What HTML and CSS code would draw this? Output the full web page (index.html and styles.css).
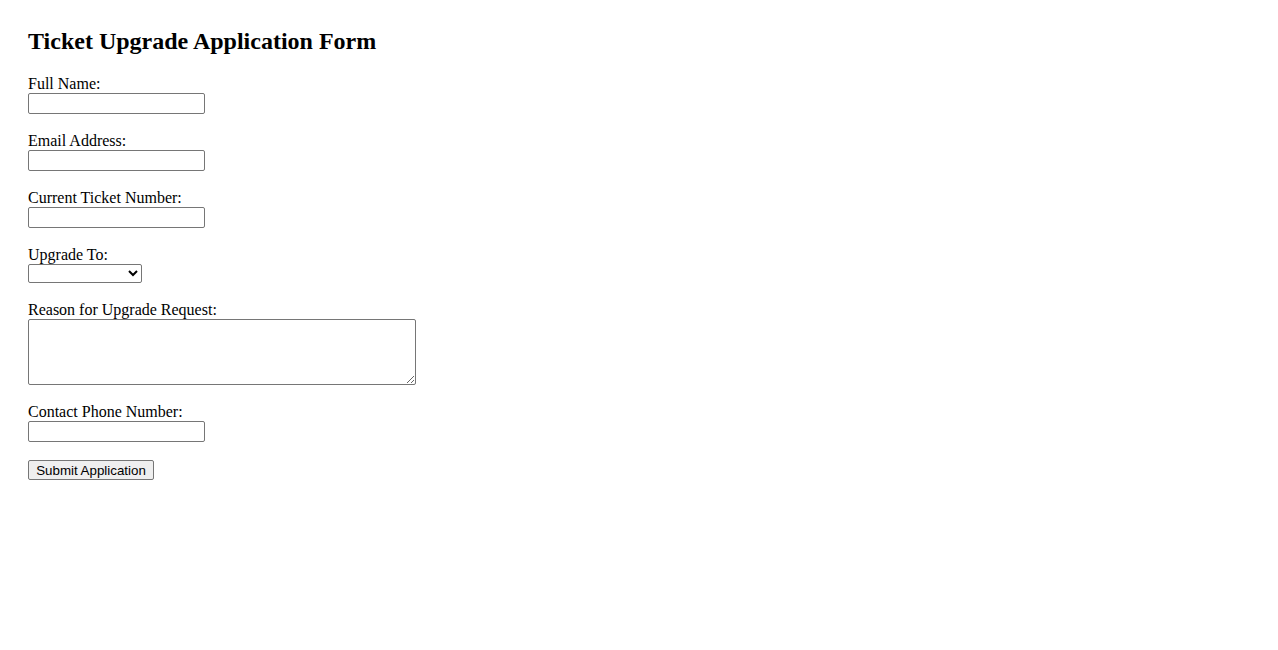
FILE: index.html
```html
<!DOCTYPE html>
<html lang="en">
<head>
<meta charset="utf-8">
<title>Ticket Upgrade Application Form</title>
<link rel="stylesheet" href="styles.css">
</head>
<body>
<div class="page">
  <h2 class="title">Ticket Upgrade Application Form</h2>
  <form class="form">
    <div class="group">
      <label class="label" for="name">Full Name:</label>
      <input class="field" type="text" id="name">
    </div>
    <div class="group">
      <label class="label" for="email">Email Address:</label>
      <input class="field" type="email" id="email">
    </div>
    <div class="group">
      <label class="label" for="ticket">Current Ticket Number:</label>
      <input class="field" type="text" id="ticket">
    </div>
    <div class="group">
      <label class="label" for="upgrade">Upgrade To:</label>
      <select class="select" id="upgrade">
        <option value=""></option>
        <option value="business">Business Class</option>
        <option value="first">First Class</option>
      </select>
    </div>
    <div class="group">
      <label class="label" for="reason">Reason for Upgrade Request:</label>
      <textarea class="area" id="reason" rows="4" cols="50"></textarea>
    </div>
    <div class="group">
      <label class="label" for="phone">Contact Phone Number:</label>
      <input class="field" type="tel" id="phone">
    </div>
    <button class="submit" type="submit">Submit Application</button>
  </form>
</div>
</body>
</html>
```

FILE: styles.css
```css
html, body {
  margin: 0;
  background: #ffffff;
}

body {
  font-family: "Liberation Serif", "Times New Roman", serif;
  font-size: 16px;
  color: #000000;
}

.page {
  padding: 28px;
}

.title {
  font-size: 24px;
  font-weight: bold;
  margin: 0 0 20px 0;
}

.group {
  margin-bottom: 18px;
}

.label {
  display: block;
}

.field {
  display: block;
  box-sizing: border-box;
  width: 177px;
  height: 21px;
  font-family: "Liberation Sans", Arial, sans-serif;
  font-size: 13.33px;
  background: #ffffff;
  border: 1px solid #767676;
  border-radius: 2px;
  padding: 1px 2px;
  margin: 0;
}

.select {
  display: block;
  box-sizing: border-box;
  width: 114px;
  height: 19px;
  font-family: "Liberation Sans", Arial, sans-serif;
  font-size: 13.33px;
  color: #000000;
  background-color: #ffffff;
  border: 1px solid #767676;
  border-radius: 2px;
  margin: 0;
}

.area {
  display: block;
  box-sizing: border-box;
  width: 388px;
  height: 66px;
  font-family: "Liberation Mono", monospace;
  font-size: 13.33px;
  background: #ffffff;
  border: 1px solid #767676;
  border-radius: 2px;
  padding: 2px;
  margin: 0;
}

.submit {
  display: block;
  box-sizing: border-box;
  width: 126px;
  height: 20px;
  font-family: "Liberation Sans", Arial, sans-serif;
  font-size: 13.33px;
  color: #000000;
  background: #efefef;
  border: 1px solid #767676;
  border-radius: 2px;
  padding: 1px 6px;
  margin: 3px 0 0 0;
}
```
